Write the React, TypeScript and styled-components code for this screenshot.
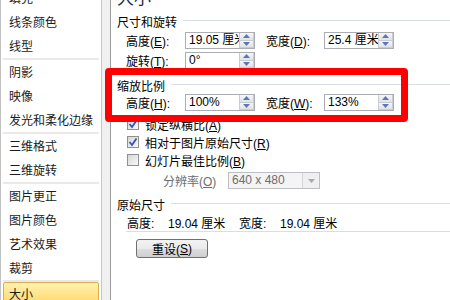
import React from 'react';
import styled, { createGlobalStyle } from 'styled-components';

const GlobalStyle = createGlobalStyle`
    html, body {
        margin: 0;
        padding: 0;
    }
    body {
        width: 450px;
        height: 300px;
        overflow: hidden;
        background: #f0f0f0;
        font-family: "Liberation Sans", "Noto Sans CJK SC", sans-serif;
        font-size: 12px;
        color: #000;
    }
`;

const groups = [
    ['填充', '线条颜色', '线型'],
    ['阴影', '映像', '发光和柔化边缘'],
    ['三维格式', '三维旋转'],
    ['图片更正', '图片颜色', '艺术效果', '裁剪'],
];

function Spin() {
    return (
        <Spinner>
            <SpinHalf>
                <svg width="7" height="4" viewBox="0 0 7 4">
                    <path d="M0 4 L3.5 0 L7 4 Z" fill="#5b78b5" />
                </svg>
            </SpinHalf>
            <SpinHalf>
                <svg width="7" height="4" viewBox="0 0 7 4">
                    <path d="M0 0 L3.5 4 L7 0 Z" fill="#5b78b5" />
                </svg>
            </SpinHalf>
        </Spinner>
    );
}

function Field({ label, hotkey, value, width }: { label: string; hotkey: string; value: string; width: number }) {
    return (
        <>
            <FieldLabel $width={width}>
                {label}(<Key>{hotkey}</Key>):
            </FieldLabel>
            <SpinInput>
                <SpinText>{value}</SpinText>
                <Spin />
            </SpinInput>
        </>
    );
}

function Check({ checked, label, hotkey }: { checked: boolean; label: string; hotkey: string }) {
    return (
        <CheckRow>
            <CheckBox>
                {checked && (
                    <svg width="10" height="10" viewBox="0 0 10 10">
                        <path d="M1.5 5 L4 8 L8.5 1.5" stroke="#3554b5" strokeWidth="1.8" fill="none" />
                    </svg>
                )}
            </CheckBox>
            <span>
                {label}(<Key>{hotkey}</Key>)
            </span>
        </CheckRow>
    );
}

export default function App() {
    return (
        <Page>
            <GlobalStyle />
            <Sidebar>
                {groups.map((items, gi) => (
                    <React.Fragment key={gi}>
                        {items.map((item) => (
                            <NavItem key={item}>{item}</NavItem>
                        ))}
                        <Separator />
                    </React.Fragment>
                ))}
                <NavItem $selected>大小</NavItem>
            </Sidebar>
            <Main>
                <Title>大小</Title>
                <SectionHeader $mt={5}>尺寸和旋转</SectionHeader>
                <FieldRow $mt={3}>
                    <Field label="高度" hotkey="E" value="19.05 厘米" width={59} />
                    <Gap />
                    <Field label="宽度" hotkey="D" value="25.4 厘米" width={58} />
                </FieldRow>
                <FieldRow $mt={3}>
                    <Field label="旋转" hotkey="T" value="0°" width={59} />
                </FieldRow>
                <SectionHeader $mt={8}>缩放比例</SectionHeader>
                <FieldRow $mt={1}>
                    <Field label="高度" hotkey="H" value="100%" width={59} />
                    <Gap />
                    <Field label="宽度" hotkey="W" value="133%" width={58} />
                </FieldRow>
                <CheckList>
                    <Check checked label="锁定纵横比" hotkey="A" />
                    <Check checked label="相对于图片原始尺寸" hotkey="R" />
                    <Check checked={false} label="幻灯片最佳比例" hotkey="B" />
                </CheckList>
                <ResolutionRow>
                    <DisabledLabel>
                        分辨率(<Key>O</Key>)
                    </DisabledLabel>
                    <Select>
                        <SelectText>640 x 480</SelectText>
                        <SelectArrow>
                            <svg width="7" height="4" viewBox="0 0 7 4">
                                <path d="M0 0 L3.5 4 L7 0 Z" fill="#a8a8a8" />
                            </svg>
                        </SelectArrow>
                    </Select>
                </ResolutionRow>
                <SectionHeader $mt={7}>原始尺寸</SectionHeader>
                <InfoRow>
                    <InfoLabel>高度:</InfoLabel>
                    <InfoValue>19.04 厘米</InfoValue>
                    <InfoLabel>宽度:</InfoLabel>
                    <InfoValue>19.04 厘米</InfoValue>
                </InfoRow>
                <ResetButton>
                    重设(<Key>S</Key>)
                </ResetButton>
                <Highlight />
            </Main>
        </Page>
    );
}

const Page = styled.div`
    display: flex;
    width: 450px;
    height: 300px;
    overflow: hidden;
`;

const Sidebar = styled.div`
    width: 102px;
    flex-shrink: 0;
    box-sizing: border-box;
    background: #fff;
    border-left: 1px solid #c2c2c2;
    border-right: 1px solid #c8c8c8;
    padding: 0 1px;
    display: flex;
    flex-direction: column;
    margin-top: -14px;
    font-family: "Noto Sans CJK SC", sans-serif;
`;

const NavItem = styled.div<{ $selected?: boolean }>`
    height: 24px;
    flex-shrink: 0;
    box-sizing: border-box;
    line-height: ${(p) => (p.$selected ? '22px' : '24px')};
    padding-left: ${(p) => (p.$selected ? '5px' : '7px')};
    margin: ${(p) => (p.$selected ? '0 1px' : '0')};
    border: ${(p) => (p.$selected ? '1px solid #dcae52' : 'none')};
    border-radius: 2px;
    background: ${(p) => (p.$selected ? 'linear-gradient(#fff1b0, #ffd764)' : 'transparent')};
    color: #1b1b1b;
    font-size: 12px;
    white-space: nowrap;
`;

const Separator = styled.div`
    height: 2px;
    flex-shrink: 0;
    margin: 0 1px;
    background: #e9e9e9;
`;

const Main = styled.div`
    position: relative;
    flex: 1;
    margin-left: 8px;
    background: #fff;
    border-left: 1px solid #9c9c9c;
    padding-left: 6px;
    display: flex;
    flex-direction: column;
`;

const Title = styled.div`
    height: 22px;
    line-height: 22px;
    margin-top: -14px;
    font-family: "Noto Sans CJK SC", sans-serif;
    font-size: 17px;
    color: #1c2a4a;
`;

const SectionHeader = styled.div<{ $mt: number }>`
    display: flex;
    align-items: center;
    gap: 6px;
    height: 16px;
    margin-top: ${(p) => p.$mt}px;
    white-space: nowrap;

    &::after {
        content: '';
        flex: 1;
        height: 1px;
        margin-top: -2px;
        background: #d8dee6;
    }
`;

const FieldRow = styled.div<{ $mt: number }>`
    display: flex;
    align-items: center;
    height: 17px;
    margin-top: ${(p) => p.$mt}px;
    padding-left: 9px;
`;

const FieldLabel = styled.div<{ $width: number }>`
    width: ${(p) => p.$width}px;
    white-space: nowrap;
`;

const Key = styled.span`
    text-decoration: underline;
`;

const Gap = styled.div`
    width: 11px;
`;

const SpinInput = styled.div`
    display: flex;
    width: 70px;
    height: 17px;
    box-sizing: border-box;
    border: 1px solid #abadb3;
    background: #fff;
    overflow: hidden;
`;

const SpinText = styled.div`
    flex: 1;
    min-width: 0;
    padding-left: 3px;
    line-height: 15px;
    white-space: nowrap;
    overflow: hidden;
`;

const Spinner = styled.div`
    width: 15px;
    flex-shrink: 0;
    display: flex;
    flex-direction: column;
`;

const SpinHalf = styled.div`
    flex: 1;
    display: flex;
    align-items: center;
    justify-content: center;
    background: linear-gradient(#f6f6f6, #dfe3e8);
    border: 1px solid #c9ccd1;
    margin-top: -1px;
`;

const CheckList = styled.div`
    display: flex;
    flex-direction: column;
    margin-top: 4px;
`;

const CheckRow = styled.div`
    display: flex;
    align-items: center;
    gap: 6px;
    height: 18px;
    padding-left: 10px;
    white-space: nowrap;
`;

const CheckBox = styled.div`
    width: 12px;
    height: 12px;
    box-sizing: border-box;
    border: 1px solid #8f8f8f;
    background: linear-gradient(135deg, #d6d6d6, #fafafa);
    display: flex;
    align-items: center;
    justify-content: center;
`;

const ResolutionRow = styled.div`
    display: flex;
    align-items: center;
    height: 17px;
    margin-top: 3px;
    padding-left: 46px;
`;

const DisabledLabel = styled.div`
    width: 65px;
    color: #6d6d6d;
    white-space: nowrap;
`;

const Select = styled.div`
    display: flex;
    width: 92px;
    height: 17px;
    box-sizing: border-box;
    border: 1px solid #bcc0c5;
    background: #f4f4f4;
`;

const SelectText = styled.div`
    flex: 1;
    padding-left: 3px;
    line-height: 15px;
    color: #6d6d6d;
`;

const SelectArrow = styled.div`
    width: 16px;
    display: flex;
    align-items: center;
    justify-content: center;
    border-left: 1px solid #d6d6d6;
    background: #efefef;
`;

const InfoRow = styled.div`
    display: flex;
    align-items: center;
    height: 17px;
    margin-top: 2px;
    margin-left: 9px;
    padding-left: 1px;
    border-bottom: 1px solid #d8dee6;
    white-space: nowrap;
`;

const InfoLabel = styled.span`
    width: 41px;
`;

const InfoValue = styled.span`
    width: 71px;
`;

const ResetButton = styled.div`
    width: 72px;
    height: 19px;
    box-sizing: border-box;
    margin-top: 7px;
    margin-left: 19px;
    border: 1px solid #707070;
    border-radius: 3px;
    background: linear-gradient(#f2f2f2 0%, #ebebeb 50%, #dddddd 51%, #cfcfcf 100%);
    display: flex;
    align-items: center;
    justify-content: center;
`;

const Highlight = styled.div`
    position: absolute;
    left: -6px;
    top: 68px;
    width: 303px;
    height: 54px;
    box-sizing: border-box;
    border: 7px solid #ff0000;
    border-radius: 4px;
    pointer-events: none;
`;
